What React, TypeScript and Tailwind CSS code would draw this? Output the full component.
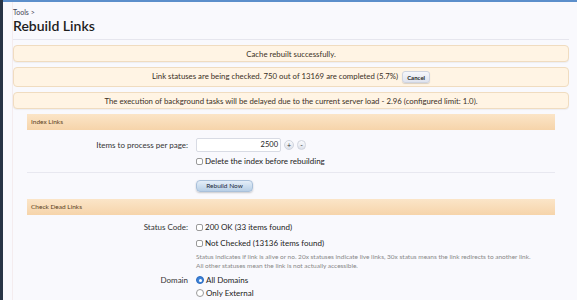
const font = { fontFamily: '"Lato", "Open Sans", sans-serif' };

function Notice({ children }: { children: React.ReactNode }) {
    return (
        <div className="flex items-center justify-center gap-1 h-[17px] rounded-[4px] border border-[#f0dcc0] bg-[#fff4e4] text-[7.8px] leading-[10px] text-[#3b3024] shadow-[0_1px_1px_rgba(0,0,0,0.05)]">
            {children}
        </div>
    );
}

function SectionHeader({ title }: { title: string }) {
    return (
        <div className="h-[16px] flex items-center px-[4px] bg-gradient-to-b from-[#fbe5c8] to-[#f6d4aa] text-[6.5px] text-[#5a3f22]">
            {title}
        </div>
    );
}

function Row({ label, children }: { label: string; children: React.ReactNode }) {
    return (
        <div className="grid grid-cols-[161px_1fr] gap-x-[8px]">
            <div className="text-right text-[8px] leading-[16px] text-[#333]">{label}</div>
            <div>{children}</div>
        </div>
    );
}

function Check({ label, radio, checked }: { label: string; radio?: boolean; checked?: boolean }) {
    return (
        <div className="flex items-center gap-[2px] h-[16px] text-[8px] text-[#222]">
            <span
                className={
                    radio
                        ? checked
                            ? 'w-[8px] h-[8px] rounded-full bg-[#3c82d8] border border-[#2d6cc0] flex items-center justify-center'
                            : 'w-[8px] h-[8px] rounded-full bg-white border border-[#9a9a9a]'
                        : 'w-[7px] h-[7px] rounded-[2px] bg-white border border-[#9a9a9a]'
                }
            >
                {radio && checked && <span className="w-[3px] h-[3px] rounded-full bg-white" />}
            </span>
            {label}
        </div>
    );
}

export default function App() {
    return (
        <div className="w-[577px] h-[300px] overflow-hidden flex bg-[#f9f9fd]" style={font}>
            <div className="w-[3px] shrink-0 bg-[#273446]" />
            <div className="flex-1 flex flex-col border-t-2 border-[#5c8fcb]">
                <div className="pl-[9px] pr-[8px]">
                    <div className="border-l border-[#f4ecee] h-full">
                        <div className="pt-[5px] text-[7px] text-[#445] leading-[10px]">Tools &gt;</div>
                        <h1 className="text-[14px] font-semibold text-[#1e1e1e] leading-[18px] pb-[4px] border-b border-[#e6e6ee]">
                            Rebuild Links
                        </h1>

                        <div className="flex flex-col gap-[5px] mt-[5px]">
                            <Notice>Cache rebuilt successfully.</Notice>
                            <div className="flex items-center justify-center gap-[4px] h-[20px] rounded-[4px] border border-[#f0dcc0] bg-[#fff4e4] text-[7.8px] text-[#3b3024]">
                                Link statuses are being checked. 750 out of 13169 are completed (5.7%)
                                <span className="px-[4px] h-[12px] flex items-center rounded-[3px] bg-gradient-to-b from-[#f6f7fb] to-[#dfe3ee] border border-[#cfd4e0] text-[6px] font-bold text-[#222] shadow-[0_1px_1px_rgba(0,0,0,0.15)]">
                                    Cancel
                                </span>
                            </div>
                            <Notice>
                                The execution of background tasks will be delayed due to the current server load - 2.96 (configured limit: 1.0).
                            </Notice>
                        </div>

                        <div className="mx-[14px] mt-[5px]">
                            <SectionHeader title="Index Links" />
                            <div className="pt-[7px] flex flex-col">
                                <Row label="Items to process per page:">
                                    <div className="flex items-center gap-[3px] h-[16px]">
                                        <div className="w-[85px] h-[14px] bg-white border border-[#d8dbe4] rounded-[2px] text-right pr-[2px] text-[7.5px] text-[#222] leading-[12px]">
                                            2500
                                        </div>
                                        <span className="w-[10px] h-[10px] rounded-full bg-gradient-to-b from-[#fafbfd] to-[#dde1ea] border border-[#d0d4de] text-[7px] leading-[8px] text-center text-[#333]">+</span>
                                        <span className="w-[9px] h-[10px] rounded-full bg-gradient-to-b from-[#fafbfd] to-[#dde1ea] border border-[#d0d4de] text-[7px] leading-[8px] text-center text-[#333]">-</span>
                                    </div>
                                </Row>
                                <Row label="">
                                    <Check label="Delete the index before rebuilding" />
                                </Row>
                            </div>
                            <div className="mt-[3px] border-t border-[#e8e8f0] pt-[7px] pb-[7px]">
                                <Row label="">
                                    <span className="flex items-center justify-center w-[57px] h-[12px] rounded-[4px] bg-gradient-to-b from-[#e4eef8] to-[#b8cfe6] border border-[#a9c0da] text-[6.5px] text-[#1d2a3a] shadow-[0_1px_2px_rgba(0,0,0,0.2)]">
                                        Rebuild Now
                                    </span>
                                </Row>
                            </div>
                            <SectionHeader title="Check Dead Links" />
                            <div className="pt-[4px] flex flex-col">
                                <Row label="Status Code:">
                                    <Check label="200 OK (33 items found)" />
                                    <Check label="Not Checked (13136 items found)" />
                                    <div className="text-[6.5px] leading-[9px] text-[#888] mt-[1px]">
                                        Status indicates if link is alive or no. 20x statuses indicate live links, 30x status means the link redirects to another link.
                                        <br />
                                        All other statuses mean the link is not actually accessible.
                                    </div>
                                </Row>
                                <div className="mt-[2px]">
                                    <Row label="Domain">
                                        <Check label="All Domains" radio checked />
                                        <div className="-mt-[3px]">
                                            <Check label="Only External" radio />
                                        </div>
                                    </Row>
                                </div>
                            </div>
                        </div>
                    </div>
                </div>
            </div>
        </div>
    );
}
